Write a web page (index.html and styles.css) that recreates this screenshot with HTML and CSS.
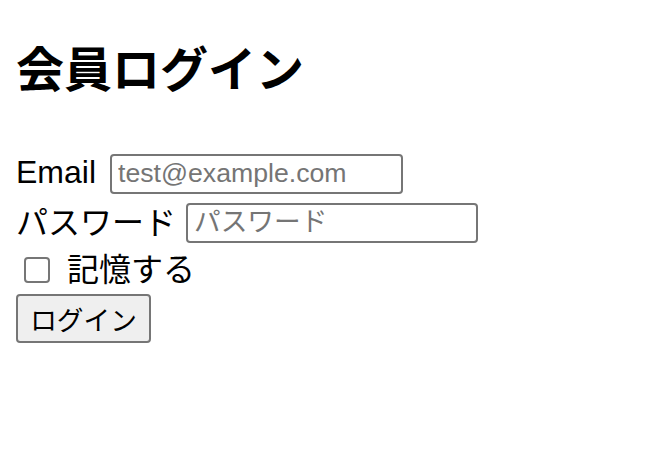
FILE: index.html
```html
<!DOCTYPE html>
<html lang="ja">
<head>
<meta charset="utf-8">
<title>会員ログイン</title>
<link rel="stylesheet" href="styles.css">
</head>
<body>
<h1 class="title">会員ログイン</h1>
<form class="login">
  <label class="row"><span class="label-text label-latin">Email</span><input class="field field-email" type="email" placeholder="test@example.com"></label>
  <label class="row"><span class="label-text">パスワード</span><input class="field field-pass" type="password" placeholder="パスワード"></label>
  <label class="row row-check"><input class="check" type="checkbox"><span class="label-text">記憶する</span></label>
  <button class="submit" type="button">ログイン</button>
</form>
</body>
</html>
```

FILE: styles.css
```css
html, body {
  background: #ffffff;
}
body {
  margin: 0 16px;
  font-family: "Liberation Sans", "Noto Sans CJK JP", sans-serif;
  font-size: 32px;
  color: #000000;
}
.title {
  margin: 43px 0 0;
  font-size: 48px;
  line-height: 56px;
  font-weight: 700;
}
.login {
  margin-top: 50px;
  display: flex;
  flex-direction: column;
  align-items: flex-start;
}
.row {
  display: flex;
  align-items: center;
  gap: 10px;
  height: 49px;
}
.row-check {
  height: 45px;
  gap: 17px;
}
.label-text {
  line-height: 40px;
}
.label-latin {
  padding-bottom: 4px;
}
.field {
  box-sizing: border-box;
  height: 40px;
  margin: 0;
  padding: 0 6px;
  border: 2px solid #767676;
  border-radius: 4px;
  font-family: "Liberation Sans", "Noto Sans CJK JP", sans-serif;
  font-size: 26.67px;
  color: #000000;
  background: #ffffff;
}
.field::placeholder {
  color: #757575;
}
.field-email {
  width: 293px;
  margin-left: 4px;
}
.field-pass {
  width: 292px;
}
.check {
  appearance: none;
  box-sizing: border-box;
  width: 26px;
  height: 26px;
  margin: 0 0 0 8px;
  border: 2px solid #767676;
  border-radius: 4px;
  background: #ffffff;
}
.submit {
  box-sizing: border-box;
  margin-top: 2px;
  width: 135px;
  height: 49px;
  padding: 0 12px;
  border: 2px solid #767676;
  border-radius: 4px;
  background: #efefef;
  font-family: "Noto Sans CJK JP", sans-serif;
  font-size: 26.67px;
  color: #000000;
}
```
